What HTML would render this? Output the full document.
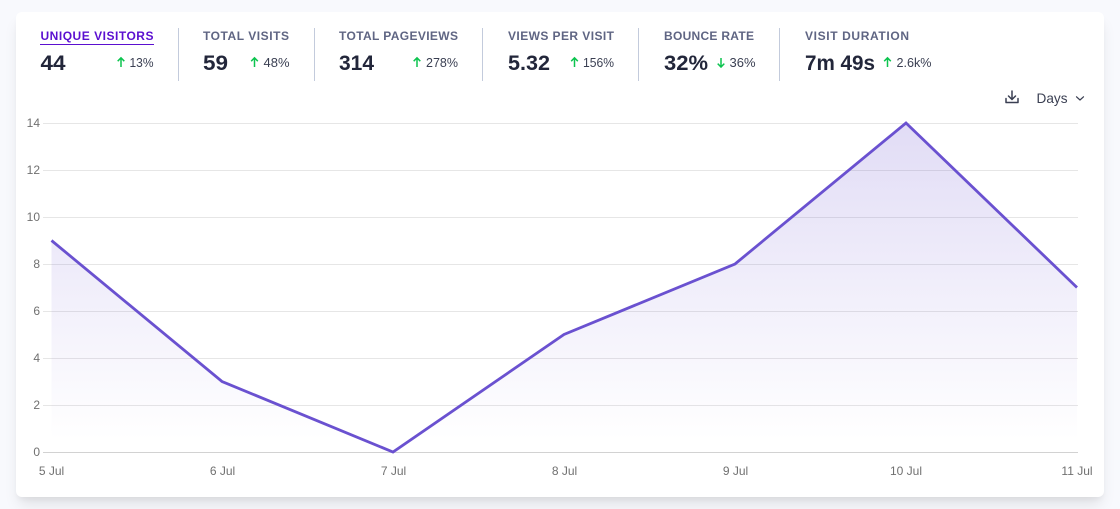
<!DOCTYPE html>
<html><head><meta charset="utf-8"><style>
html,body{margin:0;padding:0;width:1120px;height:509px;overflow:hidden;background:#f8f9fd}
.card{position:absolute;left:16px;top:12px;width:1088px;height:485px;background:#fff;border-radius:6px;box-shadow:0 10px 15px -3px rgba(0,0,0,.1),0 4px 6px -2px rgba(0,0,0,.05)}
svg{position:absolute;left:0;top:0;font-family:"Liberation Sans",sans-serif}
.l{font-size:12px;font-weight:700;fill:#5f6583}
.v{font-size:21px;font-weight:700;fill:#22263a}
.p{font-size:12.5px;fill:#3a3f52}
.a{font-size:12px;fill:#707070}
.arr{fill:none;stroke:#0cc44f;stroke-width:1.5}
.g{stroke:#e6e6e6;stroke-width:1}
</style></head><body>
<div class="card"></div>
<svg width="1120" height="509" viewBox="0 0 1120 509" xmlns="http://www.w3.org/2000/svg">
<defs><linearGradient id="f" x1="0" y1="123" x2="0" y2="440" gradientUnits="userSpaceOnUse"><stop offset="0" stop-color="#6a51d0" stop-opacity=".2"/><stop offset="1" stop-color="#6a51d0" stop-opacity="0"/></linearGradient></defs>

<g stroke="#c3cbdc" stroke-width="1">
<path d="M178.500 28V81M314.500 28V81M482.500 28V81M638.500 28V81M779.500 28V81"/>
</g>

<text class="l" x="40.500" y="40" textLength="113" style="fill:#5b0fd0">UNIQUE VISITORS</text>
<rect x="40" y="44" width="114" height="1" fill="#5b0fd0"/>
<text class="v" x="40.500" y="70" textLength="25" lengthAdjust="spacingAndGlyphs">44</text>
<path class="arr" d="M121 67V58M117.700 61.200L121 57.800L124.300 61.200"/>
<text class="p" x="129.500" y="67" textLength="24" lengthAdjust="spacingAndGlyphs">13%</text>

<text class="l" x="203" y="40" textLength="86">TOTAL VISITS</text>
<text class="v" x="203" y="70" textLength="25" lengthAdjust="spacingAndGlyphs">59</text>
<path class="arr" d="M254.500 67V58M251.200 61.200L254.500 57.800L257.800 61.200"/>
<text class="p" x="263.500" y="67" textLength="26" lengthAdjust="spacingAndGlyphs">48%</text>

<text class="l" x="339" y="40" textLength="119">TOTAL PAGEVIEWS</text>
<text class="v" x="339" y="70" textLength="35" lengthAdjust="spacingAndGlyphs">314</text>
<path class="arr" d="M417 67V58M413.700 61.200L417 57.800L420.300 61.200"/>
<text class="p" x="426" y="67" textLength="32" lengthAdjust="spacingAndGlyphs">278%</text>

<text class="l" x="508" y="40" textLength="106">VIEWS PER VISIT</text>
<text class="v" x="508" y="70" textLength="42" lengthAdjust="spacingAndGlyphs">5.32</text>
<path class="arr" d="M574.500 67V58M571.200 61.200L574.500 57.800L577.800 61.200"/>
<text class="p" x="583" y="67" textLength="31" lengthAdjust="spacingAndGlyphs">156%</text>

<text class="l" x="664" y="40" textLength="90">BOUNCE RATE</text>
<text class="v" x="664" y="70" textLength="44" lengthAdjust="spacingAndGlyphs">32%</text>
<path class="arr" d="M721 58V67M717.700 63.600L721 67L724.300 63.600"/>
<text class="p" x="729.500" y="67" textLength="26" lengthAdjust="spacingAndGlyphs">36%</text>

<text class="l" x="805" y="40" textLength="104">VISIT DURATION</text>
<text class="v" x="805" y="70" textLength="70" lengthAdjust="spacingAndGlyphs">7m 49s</text>
<path class="arr" d="M887.500 67V58M884.200 61.200L887.500 57.800L890.800 61.200"/>
<text class="p" x="896.500" y="67" textLength="35" lengthAdjust="spacingAndGlyphs">2.6k%</text>

<g fill="none" stroke="#3a3f52" stroke-width="1.500" stroke-linecap="round" stroke-linejoin="round">
<path d="M1006 98.500V102.500H1018V98.500M1012 91V99.500M1008.500 96L1012 99.500L1015.500 96"/>
<path d="M1076.500 96.800L1080 100L1083.500 96.800" stroke-width="1.200"/>
</g>
<text x="1036.500" y="103" font-size="14" fill="#3a3f52" textLength="31" lengthAdjust="spacingAndGlyphs">Days</text>

<g class="g">
<path d="M43 123.500H1078M43 170.500H1078M43 217.500H1078M43 264.500H1078M43 311.500H1078M43 358.500H1078M43 405.500H1078"/>
</g>
<path d="M43 452.500H1078" stroke="#d2d2d2" stroke-width="1"/>

<path d="M51.500 240.500L222 381.500L393 452L564 334.500L735 264L906 123L1077 287.500V452H51.500Z" fill="url(#f)"/>
<path d="M51.500 240.500L222 381.500L393 452L564 334.500L735 264L906 123L1077 287.500" fill="none" stroke="#6a51d0" stroke-width="2.800"/>

<g class="a" text-anchor="end">
<text x="40" y="127">14</text><text x="40" y="174">12</text><text x="40" y="221">10</text>
<text x="40" y="268">8</text><text x="40" y="315">6</text><text x="40" y="362">4</text>
<text x="40" y="409">2</text><text x="40" y="456">0</text>
</g>
<g class="a" text-anchor="middle">
<text x="51.500" y="475">5 Jul</text><text x="222.500" y="475">6 Jul</text><text x="393.500" y="475">7 Jul</text>
<text x="564.500" y="475">8 Jul</text><text x="735.500" y="475">9 Jul</text><text x="906" y="475">10 Jul</text><text x="1077" y="475">11 Jul</text>
</g>
</svg>
</body></html>
